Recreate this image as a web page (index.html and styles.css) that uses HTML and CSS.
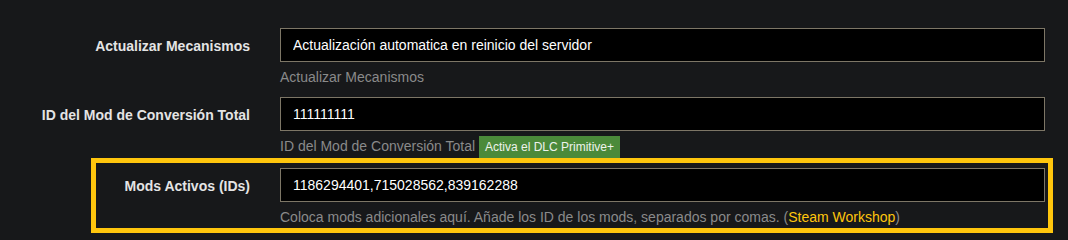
FILE: index.html
```html
<!DOCTYPE html>
<html lang="es">
<head>
<meta charset="utf-8">
<title>Configuración</title>
<link rel="stylesheet" href="styles.css">
</head>
<body>
<form class="form">
  <div class="row">
    <label class="label" for="f1">Actualizar Mecanismos</label>
    <input class="field" id="f1" type="text" value="Actualización automatica en reinicio del servidor">
    <div class="help">Actualizar Mecanismos</div>
  </div>
  <div class="row row-tight">
    <label class="label" for="f2">ID del Mod de Conversión Total</label>
    <input class="field" id="f2" type="text" value="111111111">
    <div class="help">ID del Mod de Conversión Total <span class="badge">Activa el DLC Primitive+</span></div>
  </div>
  <div class="row row-highlight">
    <label class="label" for="f3">Mods Activos (IDs)</label>
    <input class="field" id="f3" type="text" value="1186294401,715028562,839162288">
    <div class="help">Coloca mods adicionales aquí. Añade los ID de los mods, separados por comas. (<a class="link" href="#">Steam Workshop</a>)</div>
  </div>
</form>
</body>
</html>
```

FILE: styles.css
```css
html, body {
  margin: 0;
  padding: 0;
  background: #17181a;
}

body {
  font-family: "Liberation Sans", Arial, sans-serif;
  font-size: 14px;
  line-height: 20px;
  color: #e2e2e2;
}

.form {
  margin: 0;
  padding-top: 28px;
}

.row {
  margin-left: 96px;
  width: 952px;
  box-sizing: border-box;
  padding-right: 3px;
  display: grid;
  grid-template-columns: 154px 765px;
  column-gap: 30px;
  margin-bottom: 10px;
}

.row-tight {
  margin-bottom: 5px;
}

.row-highlight {
  padding-top: 5px;
  padding-bottom: 1px;
  outline: 5px solid #ffc60d;
}

.label {
  grid-column: 1;
  grid-row: 1;
  justify-self: end;
  text-align: right;
  font-weight: bold;
  padding-top: 8px;
  line-height: 20px;
  color: #e4e4e4;
  white-space: nowrap;
}

.field {
  grid-column: 2;
  grid-row: 1;
  box-sizing: border-box;
  width: 765px;
  height: 34px;
  margin: 0;
  padding: 6px 12px;
  border: 1px solid #7d7666;
  border-radius: 0;
  background: #000;
  color: #fff;
  font-family: "Liberation Sans", Arial, sans-serif;
  font-size: 14px;
  line-height: 20px;
  outline: none;
}

.help {
  grid-column: 2;
  grid-row: 2;
  margin-top: 5px;
  line-height: 20px;
  color: #8a8a8a;
  white-space: nowrap;
}

.badge {
  display: inline-block;
  background: #4b8a3a;
  color: #eef3ec;
  font-size: 12px;
  line-height: 22px;
  padding: 0 6px;
}

.link {
  color: #ffc60d;
  text-decoration: none;
}
```
